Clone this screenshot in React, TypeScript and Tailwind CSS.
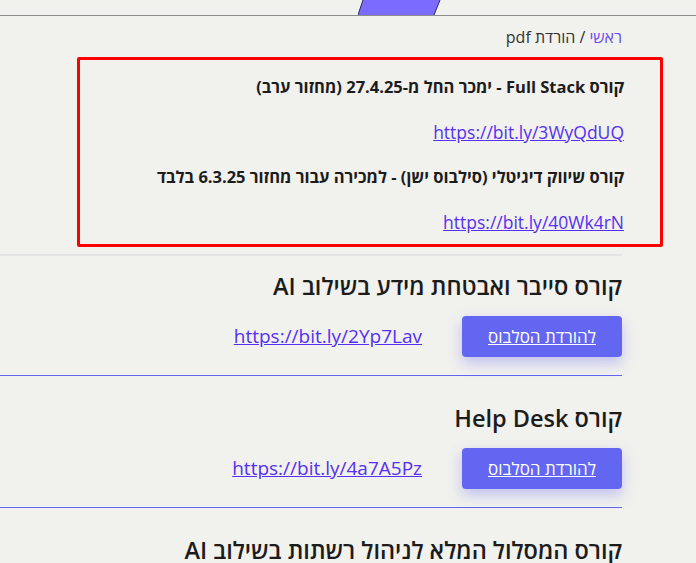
import React from 'react';

const courses = [
  { title: 'קורס סייבר ואבטחת מידע בשילוב AI', link: 'https://bit.ly/2Yp7Lav', first: true },
  { title: 'קורס Help Desk', link: 'https://bit.ly/4a7A5Pz', first: false },
  { title: 'קורס המסלול המלא לניהול רשתות בשילוב AI', link: 'https://bit.ly/3Xk2Lmq', first: false },
];

const App = () => {
  return (
    <div dir="rtl" className="min-h-screen bg-[#f1f1ee] text-[#1c1c1c] font-['Open_Sans','Liberation_Sans',sans-serif] overflow-hidden">
      {/* Header strip with logo tab */}
      <header className="h-[16px] border-b border-[#8c8c8c] flex items-end">
        <svg width="84" height="15" viewBox="0 0 84 15" className="mr-[254px] block">
          <polygon points="5,0 82,0 76,15 0,15" fill="#7b6cff" />
          <line x1="5" y1="0" x2="0" y2="15" stroke="#2b2b55" strokeWidth="1" />
          <line x1="82" y1="0" x2="76" y2="15" stroke="#2b2b55" strokeWidth="1" />
        </svg>
      </header>

      <main className="pr-[74px]">
        {/* Breadcrumb */}
        <nav className="mt-[10px] text-[16px] leading-[22px] text-[#333]">
          <a href="#" className="text-[#6a4cf0]">ראשי</a>
          <span> / </span>
          <span>הורדת pdf</span>
        </nav>

        {/* Notice box */}
        <div className="mt-[9px] ml-[77px] -mr-[41px] border-[3px] border-[#ff0000] rounded-[2px] pr-[36px] pt-[15px] pb-[10px] flex flex-col gap-[21px]">
          <p className="text-[16.5px] leading-[24px] font-bold">קורס Full Stack - ימכר החל מ-27.4.25 (מחזור ערב)</p>
          <a href="#" className="text-[17.5px] leading-[24px] text-[#5530f2] underline">https://bit.ly/3WyQdUQ</a>
          <p className="text-[16.5px] leading-[24px] font-bold">קורס שיווק דיגיטלי (סילבוס ישן) - למכירה עבור מחזור 6.3.25 בלבד</p>
          <a href="#" className="text-[17.5px] leading-[24px] text-[#5530f2] underline">https://bit.ly/40Wk4rN</a>
        </div>

        <hr className="mt-[7px] border-0 border-t-2 border-[#e4e4e4]" />

        {courses.map((c, i) => (
          <section key={i} className={c.first ? 'pt-[15px]' : 'border-t border-[#6366f1] pt-[27px]'}>
            <h2 className="text-[23.5px] leading-[30px] font-semibold whitespace-nowrap">{c.title}</h2>
            <div className="mt-[15px] mb-[18px] flex items-center gap-[40px]">
              <a
                href="#"
                className="w-[160px] h-[41px] flex items-center justify-center rounded-[4px] bg-[#6366f1] text-white text-[17px] underline shadow-[0_6px_14px_rgba(99,102,241,0.35)]"
              >
                להורדת הסלבוס
              </a>
              <a href="#" className="text-[19px] text-[#5530f2] underline">{c.link}</a>
            </div>
          </section>
        ))}
      </main>
    </div>
  );
};

export default App;
